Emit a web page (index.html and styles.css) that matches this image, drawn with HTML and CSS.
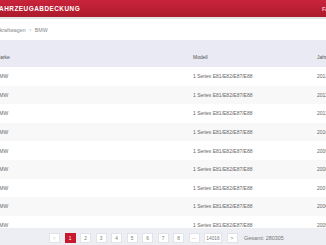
FILE: index.html
```html
<!DOCTYPE html>
<html lang="de">
<head>
    <meta charset="UTF-8">
    <title>Fahrzeugabdeckung</title>
    <link rel="stylesheet" href="styles.css">
</head>
<body>
    <header class="topbar">
        <div class="brand">FAHRZEUGABDECKUNG</div>
        <nav class="nav">FAHRZEUGE</nav>
    </header>

    <div class="crumbs">
        <span>Personenkraftwagen</span>
        <span class="sep">&gt;</span>
        <span>BMW</span>
    </div>

    <div class="table">
        <div class="row head">
            <div>Marke</div>
            <div>Modell</div>
            <div>Jahr</div>
        </div>
        <div class="row"><div>BMW</div><div>1 Series E81/E82/E87/E88</div><div>2013</div></div>
        <div class="row"><div>BMW</div><div>1 Series E81/E82/E87/E88</div><div>2012</div></div>
        <div class="row"><div>BMW</div><div>1 Series E81/E82/E87/E88</div><div>2011</div></div>
        <div class="row"><div>BMW</div><div>1 Series E81/E82/E87/E88</div><div>2010</div></div>
        <div class="row"><div>BMW</div><div>1 Series E81/E82/E87/E88</div><div>2009</div></div>
        <div class="row"><div>BMW</div><div>1 Series E81/E82/E87/E88</div><div>2008</div></div>
        <div class="row"><div>BMW</div><div>1 Series E81/E82/E87/E88</div><div>2007</div></div>
        <div class="row"><div>BMW</div><div>1 Series E81/E82/E87/E88</div><div>2006</div></div>
        <div class="row"><div>BMW</div><div>1 Series E81/E82/E87/E88</div><div>2005</div></div>
    </div>

    <footer class="pager">
        <span class="page off">&lt;</span>
        <span class="page active">1</span>
        <span class="page">2</span>
        <span class="page">3</span>
        <span class="page">4</span>
        <span class="page">5</span>
        <span class="page">6</span>
        <span class="page">7</span>
        <span class="page">8</span>
        <span class="page">&middot;&middot;&middot;</span>
        <span class="page wide">14016</span>
        <span class="page">&gt;</span>
        <span class="total">Gesamt: 280305</span>
    </footer>
</body>
</html>
```

FILE: styles.css
```css
body {
    margin: 0;
    font-family: "Liberation Sans", Arial, sans-serif;
    background-color: #ffffff;
    overflow: hidden;
    color: #555;
}

.topbar {
    display: flex;
    align-items: center;
    height: 17px;
    background: linear-gradient(#c9243b, #ac1a2c);
    border-bottom: 2px solid #e4e4e8;
    white-space: nowrap;
}
.brand {
    flex: 0 0 327px;
    margin-left: -5px;
    color: #fff;
    font-weight: bold;
    font-size: 6.4px;
    letter-spacing: 0.5px;
}
.nav {
    color: #f3c6cc;
    font-size: 5.5px;
    font-weight: bold;
}

.crumbs {
    display: flex;
    gap: 3px;
    height: 21px;
    align-items: center;
    margin-left: -23px;
    font-size: 5.3px;
    color: #888;
    white-space: nowrap;
}
.sep {
    color: #bbb;
}

.table {
    margin-left: -4px;
    font-size: 5px;
    color: #666;
}
.row {
    display: grid;
    grid-template-columns: 197px 124px 1fr;
    height: 18.6px;
    align-items: center;
    white-space: nowrap;
}
.row:nth-child(odd) {
    background-color: #f8f8f9;
}
.row.head {
    height: 27px;
    align-items: end;
    padding-bottom: 7px;
    box-sizing: border-box;
    background-color: #e9eaf4;
    color: #555;
}

.pager {
    position: fixed;
    left: 0;
    right: 0;
    bottom: 0;
    height: 17px;
    padding: 5px 0 0 49px;
    box-sizing: border-box;
    display: flex;
    align-items: flex-start;
    gap: 4.5px;
    background-color: #eceef4;
    font-size: 4.8px;
}
.page {
    width: 11px;
    height: 10px;
    display: flex;
    align-items: center;
    justify-content: center;
    background-color: #fff;
    border: 1px solid #e2e3e8;
    box-sizing: border-box;
    color: #777;
}
.page.off {
    color: #ccc;
}
.page.active {
    background-color: #c8192e;
    border-color: #c8192e;
    color: #fff;
}
.page.wide {
    width: 18px;
}
.total {
    margin-left: 2px;
    height: 10px;
    display: flex;
    align-items: center;
    font-size: 5.4px;
    color: #777;
}
```
